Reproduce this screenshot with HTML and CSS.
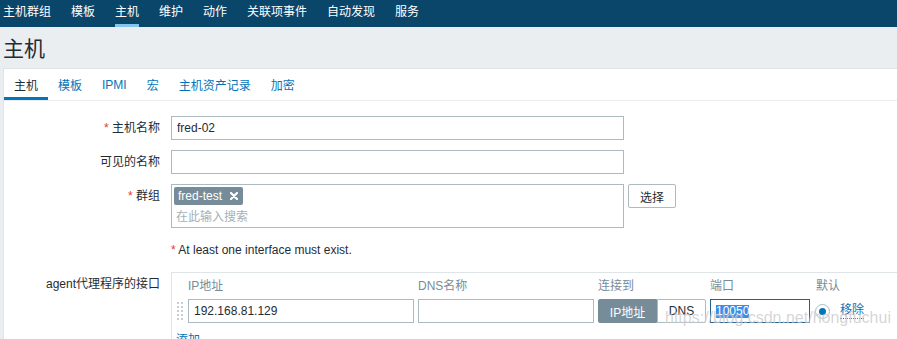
FILE: index.html
```html
<!DOCTYPE html>
<html lang="zh-cn">
<head>
    <meta charset="UTF-8">
    <meta name="viewport" content="width=device-width, initial-scale=1.0">
    <title>主机</title>
    <link rel="stylesheet" href="styles.css">
</head>
<body>
    <nav class="top-nav">
        <ul class="top-nav-list">
            <li>主机群组</li>
            <li>模板</li>
            <li class="active">主机</li>
            <li>维护</li>
            <li>动作</li>
            <li>关联项事件</li>
            <li>自动发现</li>
            <li>服务</li>
        </ul>
    </nav>

    <header class="page-header">
        <h1>主机</h1>
    </header>

    <main class="page-body">
        <ul class="tabs">
            <li class="active">主机</li>
            <li>模板</li>
            <li>IPMI</li>
            <li>宏</li>
            <li>主机资产记录</li>
            <li>加密</li>
        </ul>

        <div class="form-list">
            <div class="form-row">
                <div class="form-label"><span class="asterisk">*</span> 主机名称</div>
                <div class="form-field"><input class="text-input" type="text" value="fred-02"></div>
            </div>
            <div class="form-row">
                <div class="form-label">可见的名称</div>
                <div class="form-field"><input class="text-input" type="text" value=""></div>
            </div>
            <div class="form-row">
                <div class="form-label"><span class="asterisk">*</span> 群组</div>
                <div class="form-field multiselect-wrap">
                    <div class="multiselect">
                        <span class="tag">fred-test
                            <svg class="tag-close" width="8" height="8" viewBox="0 0 8 8"><path d="M1 1 L7 7 M7 1 L1 7" stroke="#fff" stroke-width="2.2" stroke-linecap="round"/></svg>
                        </span>
                        <div class="ms-placeholder">在此输入搜索</div>
                    </div>
                    <button class="btn">选择</button>
                </div>
            </div>
            <div class="form-row">
                <div class="form-label"></div>
                <div class="form-field error-line"><span class="asterisk">*</span> At least one interface must exist.</div>
            </div>
            <div class="form-row">
                <div class="form-label">agent代理程序的接口</div>
                <div class="form-field">
                    <div class="iface-box">
                        <div class="iface-grid iface-head">
                            <div></div>
                            <div>IP地址</div>
                            <div>DNS名称</div>
                            <div>连接到</div>
                            <div>端口</div>
                            <div class="col-default">默认</div>
                        </div>
                        <div class="iface-grid iface-row">
                            <div class="drag-handle">
                                <svg width="6" height="18" viewBox="0 0 6 18">
                                    <g fill="#c5ced3">
                                        <rect x="0" y="0" width="2" height="2"/><rect x="4" y="0" width="2" height="2"/>
                                        <rect x="0" y="4" width="2" height="2"/><rect x="4" y="4" width="2" height="2"/>
                                        <rect x="0" y="8" width="2" height="2"/><rect x="4" y="8" width="2" height="2"/>
                                        <rect x="0" y="12" width="2" height="2"/><rect x="4" y="12" width="2" height="2"/>
                                        <rect x="0" y="16" width="2" height="2"/><rect x="4" y="16" width="2" height="2"/>
                                    </g>
                                </svg>
                            </div>
                            <input class="text-input" type="text" value="192.168.81.129">
                            <input class="text-input" type="text" value="">
                            <div class="seg">
                                <button class="seg-btn on">IP地址</button>
                                <button class="seg-btn">DNS</button>
                            </div>
                            <div class="text-input focused"><span class="sel">10050</span></div>
                            <div class="col-default default-cell">
                                <span class="radio"></span>
                                <a class="link">移除</a>
                            </div>
                        </div>
                        <div class="iface-add"><a class="link">添加</a></div>
                    </div>
                </div>
            </div>
        </div>
    </main>

    <div class="watermark">https://blog.csdn.net/hongfuchui</div>
</body>
</html>
```

FILE: styles.css
```css
html, body {
    margin: 0;
    overflow: hidden;
}
body {
    font-family: "Liberation Sans", "Noto Sans CJK SC", sans-serif;
    font-size: 12px;
    color: #1f2c33;
    background: #ebeef0;
}

/* top menu */
.top-nav {
    background: #0a466a;
    height: 27px;
}
.top-nav-list {
    list-style: none;
    margin: 0;
    padding: 0 0 0 3px;
    display: flex;
    gap: 20px;
}
.top-nav-list li {
    color: #fff;
    line-height: 24px;
    border-bottom: 3px solid transparent;
}
.top-nav-list li.active {
    border-bottom-color: #84c5f0;
}

.page-header {
    height: 41px;
    padding: 0 3px;
    display: flex;
    align-items: center;
}
.page-header h1 {
    margin: 0;
    padding-top: 3px;
    font-size: 21px;
    font-weight: normal;
    line-height: 24px;
}

.page-body {
    margin-left: 3px;
    height: 300px;
    background: #fff;
    border-top: 1px solid #dfe4e7;
    border-left: 1px solid #dfe4e7;
}

/* tabs */
.tabs {
    list-style: none;
    margin: 0;
    padding: 0;
    display: flex;
    border-bottom: 1px solid #ebeef0;
}
.tabs li {
    height: 31px;
    box-sizing: border-box;
    padding: 3px 10px 0;
    display: flex;
    align-items: center;
    color: #0275b8;
    border-bottom: 3px solid transparent;
}
.tabs li.active {
    color: #1f2c33;
    border-bottom-color: #0275b8;
}

/* form */
.form-list {
    padding-top: 15px;
    display: flex;
    flex-direction: column;
    gap: 10px;
}
.form-row {
    display: grid;
    grid-template-columns: 156px 1fr;
    column-gap: 11px;
}
.form-label {
    text-align: right;
    line-height: 24px;
}
.asterisk {
    color: #e33734;
}
.text-input {
    width: 453px;
    height: 24px;
    box-sizing: border-box;
    margin: 0;
    padding: 0 5px;
    border: 1px solid #acbbc2;
    background: #fff;
    font: inherit;
    color: #1f2c33;
    outline: none;
}

.multiselect-wrap {
    display: flex;
    align-items: flex-start;
    gap: 4px;
}
.multiselect {
    width: 453px;
    height: 44px;
    box-sizing: border-box;
    border: 1px solid #acbbc2;
    padding: 2px;
}
.tag {
    display: inline-flex;
    align-items: center;
    gap: 8px;
    height: 18px;
    padding: 0 5px 0 4px;
    background: #768d99;
    color: #fff;
    border-radius: 2px;
}
.ms-placeholder {
    margin-top: 2px;
    padding-left: 2px;
    line-height: 20px;
    color: #a3b1b8;
}
.btn {
    width: 48px;
    height: 24px;
    padding: 0;
    border: 1px solid #acbbc2;
    border-radius: 2px;
    background: #fff;
    font: inherit;
    color: #1f2c33;
}

.error-line {
    line-height: 24px;
}

/* interfaces table */
.iface-box {
    width: 760px;
    border-top: 1px solid #dfe4e7;
    border-left: 1px solid #dfe4e7;
}
.iface-grid {
    display: grid;
    grid-template-columns: 12px 226px 176px 108px 100px 90px;
    column-gap: 4px;
}
.iface-head {
    line-height: 26px;
    color: #768d99;
}
.col-default {
    margin-left: 2px;
}
.iface-row .text-input {
    width: 100%;
}
.drag-handle {
    display: flex;
    align-items: center;
    padding-left: 5px;
}
.seg {
    display: flex;
}
.seg-btn {
    height: 24px;
    width: 49px;
    margin: 0;
    padding: 0;
    border: 1px solid #acbbc2;
    background: #fff;
    font: inherit;
    color: #1f2c33;
    border-radius: 0 2px 2px 0;
}
.seg-btn.on {
    width: 59px;
    background: #768d99;
    border-color: #768d99;
    color: #fff;
    border-radius: 2px 0 0 2px;
}
.text-input.focused {
    border-color: #1f6193;
    display: flex;
    align-items: center;
}
.sel {
    background: #3a8ee6;
    color: #fff;
    line-height: 13px;
}
.default-cell {
    display: flex;
    align-items: center;
    gap: 10px;
}
.radio {
    width: 15px;
    height: 15px;
    box-sizing: border-box;
    margin-left: -1px;
    border: 1px solid #acbbc2;
    border-radius: 50%;
    display: flex;
    align-items: center;
    justify-content: center;
}
.radio::after {
    content: "";
    width: 7px;
    height: 7px;
    border-radius: 50%;
    background: #0275b8;
}
.link {
    color: #0275b8;
    border-bottom: 1px dotted #0275b8;
    line-height: 15px;
}
.iface-add {
    padding: 10px 0 0 4px;
}

.watermark {
    position: absolute;
    left: 665px;
    top: 308px;
    font-size: 16px;
    line-height: 20px;
    white-space: nowrap;
    color: rgba(160, 160, 160, 0.45);
    text-shadow: 0 0 1px rgba(255, 255, 255, 0.7);
    pointer-events: none;
}
```
